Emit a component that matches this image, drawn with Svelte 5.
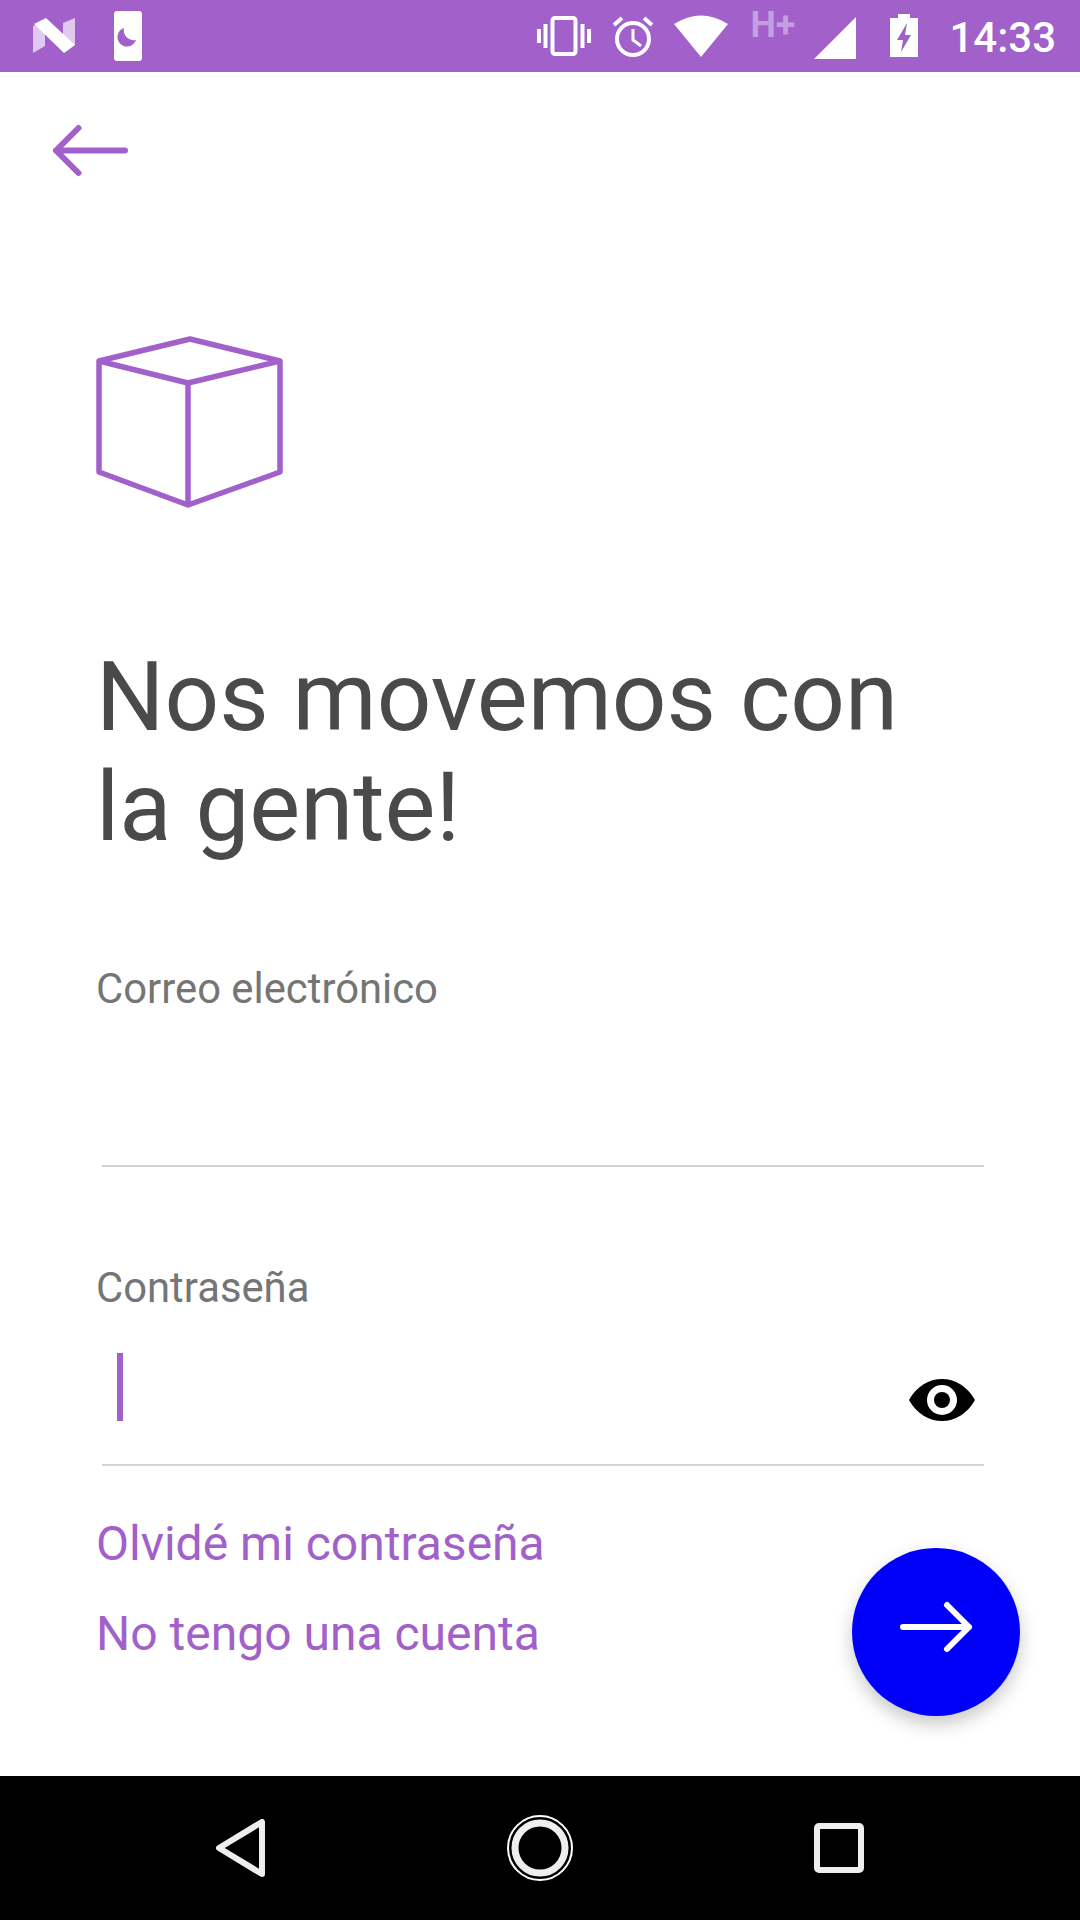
<script>
  const links = ['Olvidé mi contraseña', 'No tengo una cuenta'];
</script>

<div class="screen">
  <header class="status">
    <div class="left">
      <svg class="n" viewBox="0 0 44 36" width="44" height="36">
        <path d="M0 8 L12 4 L12 28 L0 35Z" fill="#e0c9ef" />
        <path d="M30 5 L42 0 L42 27 L30 30Z" fill="#e0c9ef" />
        <path d="M1 6 L13 0 L42 27 L31 35Z" fill="#fff" />
      </svg>
      <svg class="phone" viewBox="0 0 28 50" width="28" height="50">
        <rect width="28" height="50" rx="3" fill="#fff" />
        <path d="M10 17 A9.5 9.5 0 1 0 22 29 A10 10 0 0 1 10 17Z" fill="#a160ca" />
      </svg>
    </div>
    <div class="right">
      <svg class="i-vib" viewBox="0 0 54 40" width="54" height="40">
        <g fill="#fff">
          <rect x="0" y="13" width="4" height="14" />
          <rect x="6.500" y="8" width="4" height="24" />
          <rect x="43.500" y="8" width="4" height="24" />
          <rect x="50" y="13" width="4" height="14" />
        </g>
        <rect x="15.500" y="2" width="23" height="36" rx="2.500" fill="none" stroke="#fff" stroke-width="4" />
      </svg>
      <svg class="i-alarm" viewBox="0 0 42 42" width="42" height="42">
        <circle cx="21" cy="24" r="16" fill="none" stroke="#fff" stroke-width="4" />
        <path d="M21 14 V25 L29 31" fill="none" stroke="#fff" stroke-width="3" />
        <path d="M2 10 L10 3 M40 10 L32 3" stroke="#fff" stroke-width="4" />
      </svg>
      <svg class="i-wifi" viewBox="0 0 54 43" width="54" height="43">
        <path d="M0 10 Q27 -7 54 10 L27 43Z" fill="#fff" />
      </svg>
      <span class="hplus">H+</span>
      <svg class="i-signal" viewBox="0 0 42 42" width="42" height="42">
        <path d="M0 42 L42 0 V42Z" fill="#fff" />
      </svg>
      <svg class="i-batt" viewBox="0 0 28 43" width="28" height="43">
        <path d="M8 0 H20 V4 H28 V43 H0 V4 H8Z" fill="#fff" />
        <path d="M17 9 L7 26 H13 L11 38 L21 21 H15Z" fill="#a160ca" />
      </svg>
      <span class="time">14:33</span>
    </div>
  </header>

  <main class="content">
    <button class="back" aria-label="Volver">
      <svg viewBox="0 0 78 56" width="78" height="56">
        <path d="M6 28.500 H75 M28.500 6 L6 28.500 L28.500 51" fill="none" stroke="#a160ca" stroke-width="6" stroke-linecap="round" stroke-linejoin="round" />
      </svg>
    </button>

    <svg class="cube" viewBox="0 0 188 172" width="188" height="172">
      <path d="M94 3 L184 25 V136 L92 169 L3 136 V25Z M3 25 L92 47 L184 25 M92 47 V169" fill="none" stroke="#a160ca" stroke-width="5.500" stroke-linejoin="round" />
    </svg>

    <h1>Nos movemos con<br />la gente!</h1>

    <section class="field email">
      <label for="email">Correo electrónico</label>
      <div class="input"></div>
    </section>

    <section class="field pass">
      <label for="pass">Contraseña</label>
      <div class="input">
        <span class="caret"></span>
        <svg class="eye" viewBox="0 0 66 42" width="66" height="42">
          <path fill-rule="evenodd" d="M0 21 C8 7 20 0 33 0 C46 0 58 7 66 21 C58 35 46 42 33 42 C20 42 8 35 0 21Z M33 6 A15 15 0 1 0 33 36 A15 15 0 1 0 33 6Z" fill="#000" />
          <circle cx="33" cy="21" r="8" fill="#000" />
        </svg>
      </div>
    </section>

    <div class="links">
      {#each links as link}
        <a href="#a">{link}</a>
      {/each}
      <button class="fab" aria-label="Siguiente">
        <svg viewBox="0 0 76 56" width="76" height="56">
          <path d="M5 28 H71 M49 6 L71 28 L49 50" fill="none" stroke="#fff" stroke-width="6" stroke-linecap="round" stroke-linejoin="round" />
        </svg>
      </button>
    </div>
  </main>

  <nav class="nav">
    <svg viewBox="0 0 50 58" width="50" height="58">
      <path d="M46 3 V55 L3 29Z" fill="none" stroke="#eee" stroke-width="6" stroke-linejoin="round" />
    </svg>
    <svg viewBox="0 0 66 66" width="66" height="66">
      <circle cx="33" cy="33" r="32" fill="none" stroke="#fff" stroke-width="2" />
      <circle cx="33" cy="33" r="25" fill="none" stroke="#eee" stroke-width="7" />
    </svg>
    <svg viewBox="0 0 50 50" width="50" height="50">
      <rect x="3" y="3" width="44" height="44" rx="2" fill="none" stroke="#eee" stroke-width="6" />
    </svg>
  </nav>
</div>

<style>
  :global(body) { margin: 0; background: #fff; }
  .screen {
    width: 1080px; height: 1920px; display: flex; flex-direction: column;
    font-family: Roboto, sans-serif; background: #fff; overflow: hidden;
  }
  .status {
    height: 72px; flex: none; background: #a160ca; display: flex;
    justify-content: space-between; align-items: center; padding: 0 24px 0 33px; box-sizing: border-box;
  }
  .left { display: flex; align-items: center; gap: 37px; }
  .right { display: flex; align-items: center; color: #fff; }
  .i-alarm { margin-left: 21px; }
  .i-wifi { margin-left: 20px; margin-top: -1px; }
  .hplus {
    font-size: 36px; line-height: 36px; font-weight: 700; color: #c39ee0; margin: -22px 0 0 22px; width: 46px;
    white-space: nowrap;
  }
  .i-signal { margin-left: 18px; margin-top: 4px; }
  .i-batt { margin-left: 34px; margin-top: -1px; }
  .time { font-size: 42px; font-weight: 500; margin-left: 31px; margin-top: 4px; line-height: 48px; }
  .content { flex: 1; padding: 0 0 0 96px; box-sizing: border-box; }
  button { border: 0; padding: 0; background: none; display: block; }
  .back { margin: 50px 0 0 -46px; }
  .back svg, .cube { display: block; }
  .cube { margin-top: 158px; }
  h1 {
    margin: 134px 0 0; font-size: 96px; font-weight: 400; line-height: 110px; color: #4a4a4a;
  }
  .field { width: 888px; }
  .email { margin-top: 103px; }
  .pass { margin-top: 97px; }
  label { display: block; font-size: 41.8px; line-height: 48px; color: #757575; }
  .input {
    margin: 0 0 0 6px; height: 154px; border-bottom: 2px solid #d4d4d4;
    position: relative; box-sizing: border-box;
  }
  .caret { position: absolute; left: 15px; top: 41px; width: 6px; height: 68px; background: #a160ca; }
  .eye { position: absolute; right: 9px; top: 67px; }
  .links { position: relative; margin-top: 52px; display: flex; flex-direction: column; gap: 38px; width: 888px; }
  a { font-size: 48px; line-height: 52px; color: #a160ca; text-decoration: none; }
  .fab {
    position: absolute; left: 756px; top: 30px; width: 168px; height: 168px; border-radius: 50%;
    background: #0000fa; display: flex; align-items: center; justify-content: center;
    box-shadow: 0 8px 18px rgba(0,0,0,.22);
  }
  .fab svg { margin-bottom: 10px; }
  .nav {
    height: 144px; flex: none; background: #000;
    display: flex; align-items: center; justify-content: space-between; padding: 0 216px; box-sizing: border-box;
  }
</style>
